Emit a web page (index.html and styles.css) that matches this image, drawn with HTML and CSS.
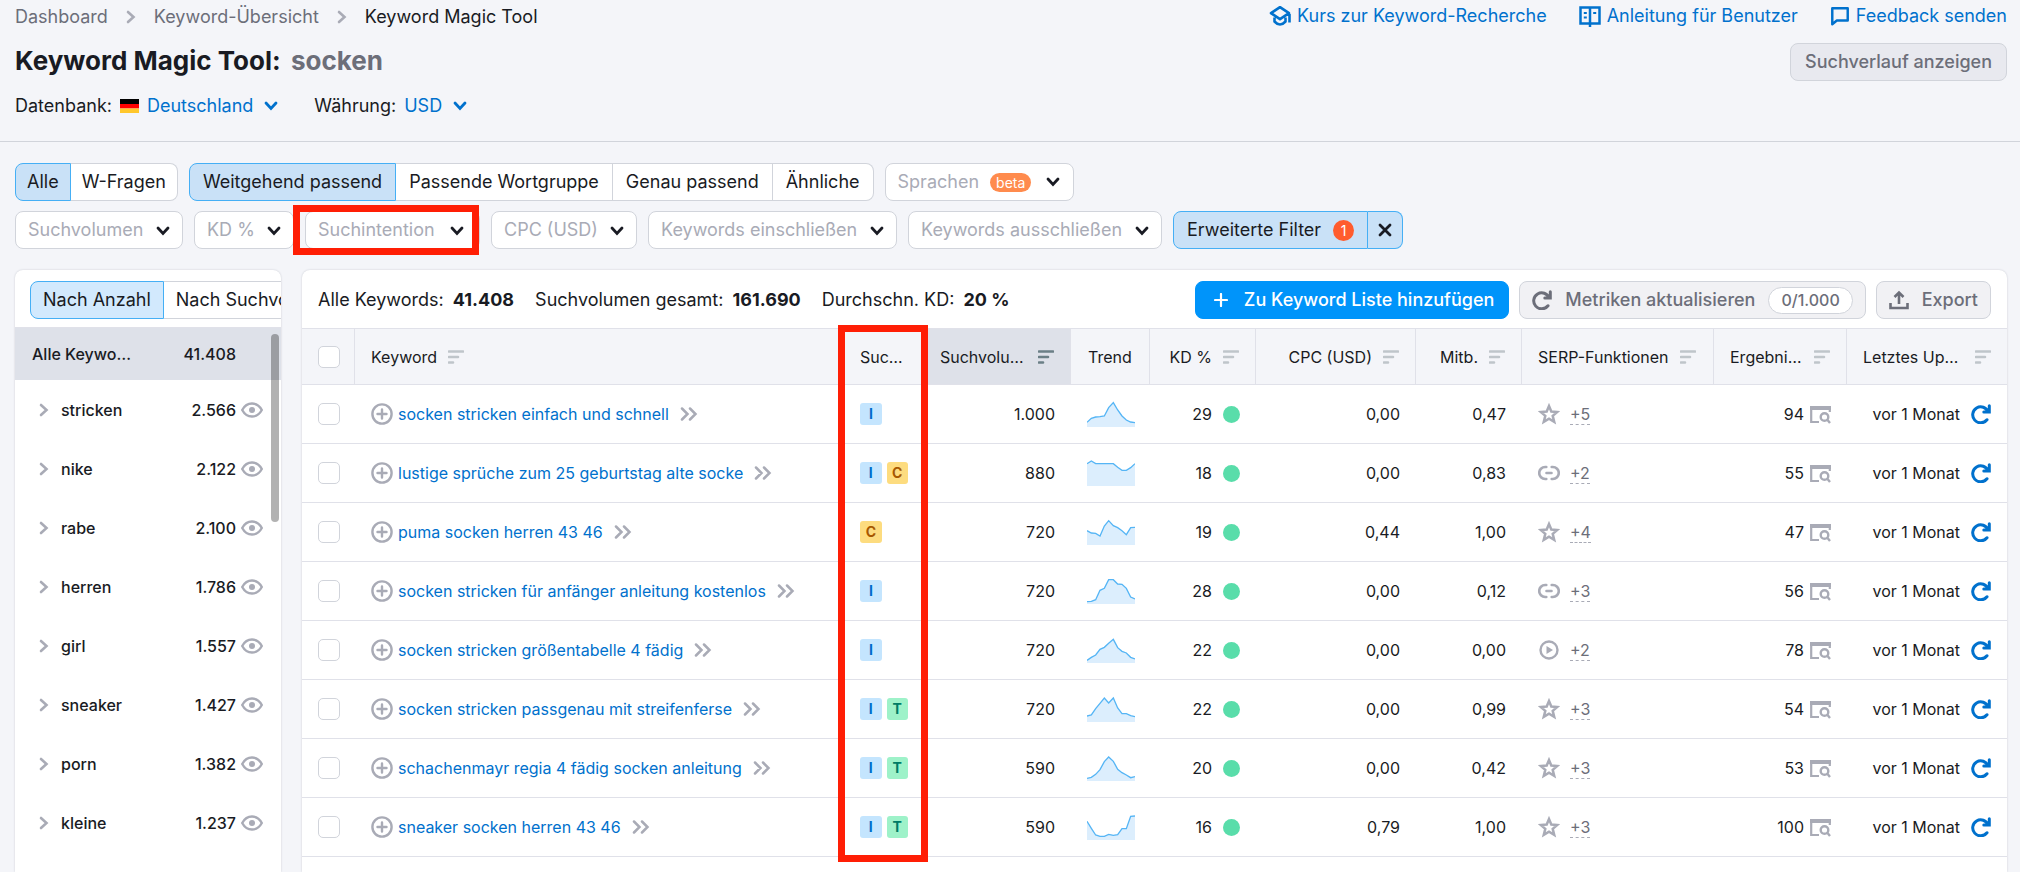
FILE: index.html
```html
<!DOCTYPE html>
<html lang="de">
<head>
<meta charset="utf-8">
<title>Keyword Magic Tool: socken</title>
<link rel="stylesheet" href="styles.css">
</head>
<body>
<svg class="sprite" aria-hidden="true">
  <symbol id="chev-down" viewBox="0 0 14 10"><path d="M2 2l5 5.500 5-5.500" fill="none" stroke="currentColor" stroke-width="2.800" stroke-linecap="round"/></symbol>
  <symbol id="chev-right" viewBox="0 0 10 14"><path d="M2 2l5.500 5L2 12" fill="none" stroke="currentColor" stroke-width="2.600" stroke-linecap="round"/></symbol>
  <symbol id="double" viewBox="0 0 18 14"><path d="M2 1.500L7.500 7 2 12.500M10 1.500L15.500 7 10 12.500" fill="none" stroke="currentColor" stroke-width="2.500" stroke-linecap="round"/></symbol>
  <symbol id="sort" viewBox="0 0 16 14"><path d="M1 1.500h14M1 7h9M1 12.500h4" fill="none" stroke="currentColor" stroke-width="2.600" stroke-linecap="round"/></symbol>
  <symbol id="plus-circle" viewBox="0 0 22 22"><circle cx="11" cy="11" r="9.600" fill="none" stroke="currentColor" stroke-width="2.400"/><path d="M11 6.500v9M6.500 11h9" stroke="currentColor" stroke-width="2.400" stroke-linecap="round"/></symbol>
  <symbol id="eye" viewBox="0 0 22 16"><path d="M1.200 8C3.500 3.700 7 1.500 11 1.500S18.500 3.700 20.800 8C18.500 12.300 15 14.500 11 14.500S3.500 12.300 1.200 8z" fill="none" stroke="currentColor" stroke-width="2.400"/><circle cx="11" cy="8" r="3" fill="currentColor"/></symbol>
  <symbol id="refresh" viewBox="0 0 20 20"><path d="M16 15.800A8 8 0 1 1 17.200 8M18.300 1.800V8H12.800" fill="none" stroke="currentColor" stroke-width="3" stroke-linecap="round"/></symbol>
  <symbol id="star" viewBox="0 0 22 22"><path d="M11 3l2.300 5.500 6 .5-4.600 3.900 1.500 5.900L11 15.600l-5.200 3.200 1.500-5.900L2.700 9l6-.5z" fill="none" stroke="currentColor" stroke-width="2.500"/></symbol>
  <symbol id="link" viewBox="0 0 22 22"><path d="M8.300 5H7.200a6 6 0 0 0 0 12h1.100M13.700 5h1.100a6 6 0 0 1 0 12h-1.100M8.500 11h5" fill="none" stroke="currentColor" stroke-width="2.600" stroke-linecap="round"/></symbol>
  <symbol id="play" viewBox="0 0 22 22"><circle cx="11" cy="11" r="8.500" fill="none" stroke="currentColor" stroke-width="2.400"/><path d="M8.500 7v8l6.500-4z" fill="currentColor"/></symbol>
  <symbol id="serp" viewBox="0 0 21 19"><path d="M0 1h21v4H0z" fill="currentColor"/><path d="M1.200 3v14H9M19.800 4v3" fill="none" stroke="currentColor" stroke-width="2.200"/><circle cx="14.500" cy="12" r="3.800" fill="none" stroke="currentColor" stroke-width="2.400"/><path d="M17.500 15l2.500 3" stroke="currentColor" stroke-width="2.400"/></symbol>
  <symbol id="upload" viewBox="0 0 20 20"><path d="M1.500 13v5h17v-5M10 14V2.500M5.500 7L10 2.500 14.500 7" fill="none" stroke="currentColor" stroke-width="2.600"/></symbol>
  <symbol id="cap" viewBox="0 0 22 22"><path d="M11 2.200L2 8.200l9 6 9-6zM20.500 9v8.500M5.500 12.500V16.500q5.500 6 11 0V12.500" fill="none" stroke="currentColor" stroke-width="2.600" stroke-linejoin="round"/></symbol>
  <symbol id="book" viewBox="0 0 22 22"><path d="M1.500 2.500h19v16h-19zM11 2.500V22" fill="none" stroke="currentColor" stroke-width="2.500"/><path d="M4.800 8h3M4.800 12.500h3M14.200 8h3" stroke="currentColor" stroke-width="2.200"/></symbol>
  <symbol id="bubble" viewBox="0 0 20 22"><path d="M1.500 2.500h17v13.500H6.500l-5 4z" fill="none" stroke="currentColor" stroke-width="2.700" stroke-linejoin="round"/></symbol>
  <symbol id="close" viewBox="0 0 14 14"><path d="M2 2l10 10M12 2L2 12" stroke="currentColor" stroke-width="2.800" stroke-linecap="round"/></symbol>
  <symbol id="plus" viewBox="0 0 14 14"><path d="M7 1v12M1 7h12" stroke="currentColor" stroke-width="2.200" stroke-linecap="round"/></symbol>
  <symbol id="flag-de" viewBox="0 0 19 14"><path d="M0 0h19v5H0z" fill="#000"/><path d="M0 5h19v4.500H0z" fill="#f00"/><path d="M0 9.500h19V14H0z" fill="#ffc72c"/></symbol>
</svg>

<header class="head">
  <div class="head-top">
    <nav class="crumbs" aria-label="Breadcrumb">
      <a href="#">Dashboard</a><svg class="i-right"><use href="#chev-right"/></svg>
      <a href="#">Keyword-Übersicht</a><svg class="i-right"><use href="#chev-right"/></svg>
      <span class="current">Keyword Magic Tool</span>
    </nav>
    <div class="help">
      <a href="#"><svg class="i-22"><use href="#cap"/></svg>Kurs zur Keyword-Recherche</a>
      <a href="#"><svg class="i-22"><use href="#book"/></svg>Anleitung für Benutzer</a>
      <a href="#"><svg class="i-20"><use href="#bubble"/></svg>Feedback senden</a>
    </div>
  </div>
  <div class="head-title">
    <h1>Keyword Magic Tool: <span>socken</span></h1>
    <button class="btn history">Suchverlauf anzeigen</button>
  </div>
  <div class="settings">
    <div class="setting">Datenbank: <svg class="flag"><use href="#flag-de"/></svg><button class="linkbtn">Deutschland<svg class="i-down"><use href="#chev-down"/></svg></button></div>
    <div class="setting">Währung: <button class="linkbtn">USD<svg class="i-down"><use href="#chev-down"/></svg></button></div>
  </div>
</header>

<section class="filters">
  <div class="filter-row">
    <div class="pills"><button class="pill on">Alle</button><button class="pill">W-Fragen</button></div>
    <div class="pills wide"><button class="pill on">Weitgehend passend</button><button class="pill">Passende Wortgruppe</button><button class="pill">Genau passend</button><button class="pill">Ähnliche</button></div>
    <button class="lang">Sprachen <span class="beta">beta</span><svg class="i-down"><use href="#chev-down"/></svg></button>
  </div>
  <div class="filter-row">
    <div class="drop"><select aria-label="Suchvolumen"><option>Suchvolumen</option></select><svg class="i-down"><use href="#chev-down"/></svg></div>
    <div class="drop"><select aria-label="KD %"><option>KD %</option></select><svg class="i-down"><use href="#chev-down"/></svg></div>
    <div class="drop marked"><select aria-label="Suchintention"><option>Suchintention</option></select><svg class="i-down"><use href="#chev-down"/></svg></div>
    <div class="drop"><select aria-label="CPC (USD)"><option>CPC (USD)</option></select><svg class="i-down"><use href="#chev-down"/></svg></div>
    <div class="drop"><select aria-label="Keywords einschließen"><option>Keywords einschließen</option></select><svg class="i-down"><use href="#chev-down"/></svg></div>
    <div class="drop"><select aria-label="Keywords ausschließen"><option>Keywords ausschließen</option></select><svg class="i-down"><use href="#chev-down"/></svg></div>
    <div class="pills"><button class="pill on adv">Erweiterte Filter <span class="count">1</span></button><button class="pill on clear" aria-label="Filter entfernen"><svg class="i-14"><use href="#close"/></svg></button></div>
  </div>
</section>

<main class="main">
  <aside class="side">
    <div class="side-top"><div class="pills wide"><button class="pill on">Nach Anzahl</button><button class="pill">Nach Suchvolumen</button></div></div>
    <div class="group all"><span>Alle Keywo…</span><b>41.408</b></div>
    <div class="group"><svg class="i-right"><use href="#chev-right"/></svg><span>stricken</span><b>2.566</b><svg class="i-eye"><use href="#eye"/></svg></div>
    <div class="group"><svg class="i-right"><use href="#chev-right"/></svg><span>nike</span><b>2.122</b><svg class="i-eye"><use href="#eye"/></svg></div>
    <div class="group"><svg class="i-right"><use href="#chev-right"/></svg><span>rabe</span><b>2.100</b><svg class="i-eye"><use href="#eye"/></svg></div>
    <div class="group"><svg class="i-right"><use href="#chev-right"/></svg><span>herren</span><b>1.786</b><svg class="i-eye"><use href="#eye"/></svg></div>
    <div class="group"><svg class="i-right"><use href="#chev-right"/></svg><span>girl</span><b>1.557</b><svg class="i-eye"><use href="#eye"/></svg></div>
    <div class="group"><svg class="i-right"><use href="#chev-right"/></svg><span>sneaker</span><b>1.427</b><svg class="i-eye"><use href="#eye"/></svg></div>
    <div class="group"><svg class="i-right"><use href="#chev-right"/></svg><span>porn</span><b>1.382</b><svg class="i-eye"><use href="#eye"/></svg></div>
    <div class="group"><svg class="i-right"><use href="#chev-right"/></svg><span>kleine</span><b>1.237</b><svg class="i-eye"><use href="#eye"/></svg></div>
    <div class="thumb"></div>
  </aside>

  <section class="panel">
    <div class="bar">
      <div class="stats"><span>Alle Keywords: <b>41.408</b></span><span>Suchvolumen gesamt: <b>161.690</b></span><span>Durchschn. KD: <b>20 %</b></span></div>
      <div class="actions">
        <button class="btn primary"><svg class="i-14"><use href="#plus"/></svg>Zu Keyword Liste hinzufügen</button>
        <button class="btn light"><svg class="i-20"><use href="#refresh"/></svg>Metriken aktualisieren<span class="quota">0/1.000</span></button>
        <button class="btn light"><svg class="i-20"><use href="#upload"/></svg>Export</button>
      </div>
    </div>
    <div class="table-wrap">
      <table>
        <colgroup><col class="c-check"><col><col class="c-intent"><col class="c-vol"><col class="c-trend"><col class="c-kd"><col class="c-cpc"><col class="c-kd"><col class="c-serp"><col class="c-res"><col class="c-upd"></colgroup>
        <thead><tr>
          <th><input type="checkbox" aria-label="Alle auswählen"></th>
          <th><div class="cell">Keyword<svg class="i-sort"><use href="#sort"/></svg></div></th>
          <th class="noline"><div class="cell">Suc…</div></th>
          <th class="sorted"><div class="cell between">Suchvolu…<svg class="i-sort"><use href="#sort"/></svg></div></th>
          <th><div class="cell center">Trend</div></th>
          <th><div class="cell end">KD %<svg class="i-sort"><use href="#sort"/></svg></div></th>
          <th><div class="cell end">CPC (USD)<svg class="i-sort"><use href="#sort"/></svg></div></th>
          <th><div class="cell end">Mitb.<svg class="i-sort"><use href="#sort"/></svg></div></th>
          <th><div class="cell">SERP-Funktionen<svg class="i-sort"><use href="#sort"/></svg></div></th>
          <th><div class="cell between">Ergebni…<svg class="i-sort"><use href="#sort"/></svg></div></th>
          <th><div class="cell between">Letztes Up…<svg class="i-sort"><use href="#sort"/></svg></div></th>
        </tr></thead>
        <tbody>
        <tr>
          <td><input type="checkbox" aria-label="Auswählen"></td>
          <td><div class="cell kw"><svg class="i-22"><use href="#plus-circle"/></svg><a href="#">socken stricken einfach und schnell</a><svg class="i-double"><use href="#double"/></svg></div></td>
          <td><div class="cell tags"><span class="tag i">I</span></div></td>
          <td><div class="cell end">1.000</div></td>
          <td><svg class="spark" viewBox="0 0 144 78"><path d="M0 64L13 52L26 48L39 47L52 45L65 20L79 5L92 27L105 45L118 57L131 63L144 65V78H0z"/><polyline points="0,64 13,52 26,48 39,47 52,45 65,20 79,5 92,27 105,45 118,57 131,63 144,65"/></svg></td>
          <td><div class="cell end kd">29<i class="dot"></i></div></td>
          <td><div class="cell end">0,00</div></td><td><div class="cell end">0,47</div></td>
          <td><div class="cell serp"><svg class="i-22"><use href="#star"/></svg><span class="more">+5</span></div></td>
          <td><div class="cell end res">94<svg class="i-serp"><use href="#serp"/></svg></div></td>
          <td><div class="cell end upd">vor 1 Monat<svg class="i-20"><use href="#refresh"/></svg></div></td>
        </tr>
        <tr>
          <td><input type="checkbox" aria-label="Auswählen"></td>
          <td><div class="cell kw"><svg class="i-22"><use href="#plus-circle"/></svg><a href="#">lustige sprüche zum 25 geburtstag alte socke</a><svg class="i-double"><use href="#double"/></svg></div></td>
          <td><div class="cell tags"><span class="tag i">I</span><span class="tag c">C</span></div></td>
          <td><div class="cell end">880</div></td>
          <td><svg class="spark" viewBox="0 0 144 78"><path d="M0 11L13 3L26 11L79 11L92 22L105 31L118 31L131 23L144 11V78H0z"/><polyline points="0,11 13,3 26,11 79,11 92,22 105,31 118,31 131,23 144,11"/></svg></td>
          <td><div class="cell end kd">18<i class="dot"></i></div></td>
          <td><div class="cell end">0,00</div></td><td><div class="cell end">0,83</div></td>
          <td><div class="cell serp"><svg class="i-22"><use href="#link"/></svg><span class="more">+2</span></div></td>
          <td><div class="cell end res">55<svg class="i-serp"><use href="#serp"/></svg></div></td>
          <td><div class="cell end upd">vor 1 Monat<svg class="i-20"><use href="#refresh"/></svg></div></td>
        </tr>
        <tr>
          <td><input type="checkbox" aria-label="Auswählen"></td>
          <td><div class="cell kw"><svg class="i-22"><use href="#plus-circle"/></svg><a href="#">puma socken herren 43 46</a><svg class="i-double"><use href="#double"/></svg></div></td>
          <td><div class="cell tags"><span class="tag c">C</span></div></td>
          <td><div class="cell end">720</div></td>
          <td><svg class="spark" viewBox="0 0 144 78"><path d="M0 35L13 42L26 43L39 51L52 21L65 5L79 20L92 26L105 35L118 47L131 26L144 25V78H0z"/><polyline points="0,35 13,42 26,43 39,51 52,21 65,5 79,20 92,26 105,35 118,47 131,26 144,25"/></svg></td>
          <td><div class="cell end kd">19<i class="dot"></i></div></td>
          <td><div class="cell end">0,44</div></td><td><div class="cell end">1,00</div></td>
          <td><div class="cell serp"><svg class="i-22"><use href="#star"/></svg><span class="more">+4</span></div></td>
          <td><div class="cell end res">47<svg class="i-serp"><use href="#serp"/></svg></div></td>
          <td><div class="cell end upd">vor 1 Monat<svg class="i-20"><use href="#refresh"/></svg></div></td>
        </tr>
        <tr>
          <td><input type="checkbox" aria-label="Auswählen"></td>
          <td><div class="cell kw"><svg class="i-22"><use href="#plus-circle"/></svg><a href="#">socken stricken für anfänger anleitung kostenlos</a><svg class="i-double"><use href="#double"/></svg></div></td>
          <td><div class="cell tags"><span class="tag i">I</span></div></td>
          <td><div class="cell end">720</div></td>
          <td><svg class="spark" viewBox="0 0 144 78"><path d="M0 71L13 70L26 65L39 37L52 31L65 5L79 5L92 18L105 19L118 31L131 57L144 63V78H0z"/><polyline points="0,71 13,70 26,65 39,37 52,31 65,5 79,5 92,18 105,19 118,31 131,57 144,63"/></svg></td>
          <td><div class="cell end kd">28<i class="dot"></i></div></td>
          <td><div class="cell end">0,00</div></td><td><div class="cell end">0,12</div></td>
          <td><div class="cell serp"><svg class="i-22"><use href="#link"/></svg><span class="more">+3</span></div></td>
          <td><div class="cell end res">56<svg class="i-serp"><use href="#serp"/></svg></div></td>
          <td><div class="cell end upd">vor 1 Monat<svg class="i-20"><use href="#refresh"/></svg></div></td>
        </tr>
        <tr>
          <td><input type="checkbox" aria-label="Auswählen"></td>
          <td><div class="cell kw"><svg class="i-22"><use href="#plus-circle"/></svg><a href="#">socken stricken größentabelle 4 fädig</a><svg class="i-double"><use href="#double"/></svg></div></td>
          <td><div class="cell tags"><span class="tag i">I</span></div></td>
          <td><div class="cell end">720</div></td>
          <td><svg class="spark" viewBox="0 0 144 78"><path d="M0 70L13 61L26 54L39 37L52 31L65 19L79 7L92 32L105 43L118 48L131 61L144 66V78H0z"/><polyline points="0,70 13,61 26,54 39,37 52,31 65,19 79,7 92,32 105,43 118,48 131,61 144,66"/></svg></td>
          <td><div class="cell end kd">22<i class="dot"></i></div></td>
          <td><div class="cell end">0,00</div></td><td><div class="cell end">0,00</div></td>
          <td><div class="cell serp"><svg class="i-22"><use href="#play"/></svg><span class="more">+2</span></div></td>
          <td><div class="cell end res">78<svg class="i-serp"><use href="#serp"/></svg></div></td>
          <td><div class="cell end upd">vor 1 Monat<svg class="i-20"><use href="#refresh"/></svg></div></td>
        </tr>
        <tr>
          <td><input type="checkbox" aria-label="Auswählen"></td>
          <td><div class="cell kw"><svg class="i-22"><use href="#plus-circle"/></svg><a href="#">socken stricken passgenau mit streifenferse</a><svg class="i-double"><use href="#double"/></svg></div></td>
          <td><div class="cell tags"><span class="tag i">I</span><span class="tag t">T</span></div></td>
          <td><div class="cell end">720</div></td>
          <td><svg class="spark" viewBox="0 0 144 78"><path d="M0 60L13 57L26 38L39 22L52 6L65 21L79 6L92 36L105 53L118 53L131 59L144 62V78H0z"/><polyline points="0,60 13,57 26,38 39,22 52,6 65,21 79,6 92,36 105,53 118,53 131,59 144,62"/></svg></td>
          <td><div class="cell end kd">22<i class="dot"></i></div></td>
          <td><div class="cell end">0,00</div></td><td><div class="cell end">0,99</div></td>
          <td><div class="cell serp"><svg class="i-22"><use href="#star"/></svg><span class="more">+3</span></div></td>
          <td><div class="cell end res">54<svg class="i-serp"><use href="#serp"/></svg></div></td>
          <td><div class="cell end upd">vor 1 Monat<svg class="i-20"><use href="#refresh"/></svg></div></td>
        </tr>
        <tr>
          <td><input type="checkbox" aria-label="Auswählen"></td>
          <td><div class="cell kw"><svg class="i-22"><use href="#plus-circle"/></svg><a href="#">schachenmayr regia 4 fädig socken anleitung</a><svg class="i-double"><use href="#double"/></svg></div></td>
          <td><div class="cell tags"><span class="tag i">I</span><span class="tag t">T</span></div></td>
          <td><div class="cell end">590</div></td>
          <td><svg class="spark" viewBox="0 0 144 78"><path d="M0 70L13 67L26 58L39 44L52 20L65 6L79 19L92 43L105 53L118 60L131 68L144 65V78H0z"/><polyline points="0,70 13,67 26,58 39,44 52,20 65,6 79,19 92,43 105,53 118,60 131,68 144,65"/></svg></td>
          <td><div class="cell end kd">20<i class="dot"></i></div></td>
          <td><div class="cell end">0,00</div></td><td><div class="cell end">0,42</div></td>
          <td><div class="cell serp"><svg class="i-22"><use href="#star"/></svg><span class="more">+3</span></div></td>
          <td><div class="cell end res">53<svg class="i-serp"><use href="#serp"/></svg></div></td>
          <td><div class="cell end upd">vor 1 Monat<svg class="i-20"><use href="#refresh"/></svg></div></td>
        </tr>
        <tr>
          <td><input type="checkbox" aria-label="Auswählen"></td>
          <td><div class="cell kw"><svg class="i-22"><use href="#plus-circle"/></svg><a href="#">sneaker socken herren 43 46</a><svg class="i-double"><use href="#double"/></svg></div></td>
          <td><div class="cell tags"><span class="tag i">I</span><span class="tag t">T</span></div></td>
          <td><div class="cell end">590</div></td>
          <td><svg class="spark" viewBox="0 0 144 78"><path d="M0 22L13 43L26 63L39 67L52 67L65 61L79 64L92 62L105 44L118 44L131 7L144 6V78H0z"/><polyline points="0,22 13,43 26,63 39,67 52,67 65,61 79,64 92,62 105,44 118,44 131,7 144,6"/></svg></td>
          <td><div class="cell end kd">16<i class="dot"></i></div></td>
          <td><div class="cell end">0,79</div></td><td><div class="cell end">1,00</div></td>
          <td><div class="cell serp"><svg class="i-22"><use href="#star"/></svg><span class="more">+3</span></div></td>
          <td><div class="cell end res">100<svg class="i-serp"><use href="#serp"/></svg></div></td>
          <td><div class="cell end upd">vor 1 Monat<svg class="i-20"><use href="#refresh"/></svg></div></td>
        </tr>
        </tbody>
      </table>
      <div class="column-mark"></div>
    </div>
  </section>
</main>
</body>
</html>
```

FILE: styles.css
```css
* { box-sizing: border-box; }
body {
  margin: 0;
  height: 100vh;
  overflow: hidden;
  display: flex;
  flex-direction: column;
  background: #f4f5f9;
  color: #191b23;
  font: 18px/24px Inter, "Liberation Sans", sans-serif;
}
button, select { font: inherit; color: inherit; margin: 0; cursor: pointer; }
a { text-decoration: none; color: inherit; }
svg { flex: none; display: block; }
.sprite { position: absolute; width: 0; height: 0; }

.i-down { width: 14px; height: 10px; }
.i-right { width: 10px; height: 14px; color: #a9abb6; }
.i-double { width: 18px; height: 14px; color: #a9abb6; }
.i-sort { width: 16px; height: 14px; color: #bfc5ca; }
.i-14 { width: 14px; height: 14px; }
.i-20 { width: 20px; height: 20px; }
.i-22 { width: 22px; height: 22px; }
.i-eye { width: 22px; height: 16px; color: #a9abb6; }
.i-serp { width: 21px; height: 19px; color: #a9abb6; }
.flag { width: 19px; height: 14px; }

.head { padding: 4px 13px 24px 15px; border-bottom: 1px solid #d1d4db; }
.head-top, .head-title { display: flex; justify-content: space-between; }
.crumbs { display: flex; align-items: center; gap: 18px; color: #6c6e79; height: 26px; }
.crumbs .current { color: #191b23; }
.help { display: flex; align-items: center; gap: 32px; color: #0071cd; height: 24px; }
.help a { display: flex; align-items: center; gap: 6px; }
.head-title { padding-top: 13px; align-items: flex-start; }
h1 { margin: 2px 0 0; font-size: 26px; line-height: 32px; font-weight: 700; }
h1 span { color: #6c6e79; margin-left: 4px; }
.settings { display: flex; gap: 36px; padding-top: 13px; }
.head { padding-bottom: 23px; }
.setting { display: flex; align-items: center; gap: 8px; }
.linkbtn { display: flex; align-items: center; gap: 11px; border: 0; padding: 0; background: none; color: #0071cd; }

.btn {
  display: flex; align-items: center; gap: 13px;
  height: 38px; padding: 0 14px;
  border: 1px solid #d1d4db; border-radius: 8px;
  background: #e8e9ef; color: #6c6e79; font-weight: 500;
}
.btn.light { background: #f1f1f4; padding: 0 12px; }
.btn.primary { background: #0094fa; border-color: #0094fa; color: #fff; gap: 16px; padding: 0 14px 0 18px; }

.filters { display: grid; gap: 10px; padding: 21px 13px 21px 15px; }
.filter-row { display: flex; gap: 11px; }
.pills { display: flex; }
.pill {
  display: flex; align-items: center;
  height: 38px; padding: 0 11px;
  border: 1px solid #d1d4db; border-left-width: 0;
  background: #fff; white-space: nowrap;
}
.wide .pill { padding: 0 13px; }
.pill:first-child { border-left-width: 1px; border-radius: 8px 0 0 8px; }
.pill:last-child { border-radius: 0 8px 8px 0; }
.pill.on { background: #c9e1f7; border-color: #45aff5; }
.pill.adv { gap: 12px; padding: 0 13px; }
.pill.clear { padding: 0 10px; }
.count {
  width: 21px; height: 21px; border-radius: 50%;
  background: #ff5c2e; color: #fff; font-size: 14px; line-height: 21px; text-align: center;
}
.lang {
  display: flex; align-items: center; gap: 11px;
  height: 38px; padding: 0 13px 0 12px;
  border: 1px solid #d1d4db; border-radius: 8px; background: #fff; color: #a9abb6;
}
.lang .i-down { color: #191b23; margin-left: 4px; }
.beta { padding: 0 6px; border-radius: 10px; background: #ff8b4d; color: #fff; font-size: 14px; line-height: 19px; }
.drop { position: relative; }
.drop select {
  appearance: none; height: 38px; padding: 0 38px 0 12px;
  border: 1px solid #d1d4db; border-radius: 8px; background: #fff; color: #a9abb6;
}
.drop .i-down { position: absolute; right: 13px; top: 15px; pointer-events: none; }
.drop.marked select { padding-right: 44px; }
.drop.marked .i-down { right: 16px; }
.marked::after {
  content: ""; position: absolute; inset: -6px 1px -6px -12px;
  border: 7px solid #ff1e05; pointer-events: none;
}

.main { flex: 1; min-height: 0; display: flex; gap: 21px; padding: 0 13px 0 15px; }
.side, .panel { background: #fff; border-radius: 8px 8px 0 0; box-shadow: 0 0 2px #c4c7cf; }
.side { position: relative; flex: none; width: 266px; overflow: hidden; font-size: 16px; font-weight: 500; }
.side-top { padding: 11px 0 8px 15px; border-bottom: 1px solid #e0e1e9; font-size: 18px; font-weight: 400; }
.side-top .pill { padding: 0 12px; }
.side-top .pill.on { background: #d2e9fd; }
.group { display: flex; align-items: center; height: 59px; padding: 0 18px 0 24px; }
.group span { flex: 1; padding-left: 12px; }
.group b { font-weight: 500; margin-right: 5px; }
.group.all { height: 52px; background: #dee1e9; padding: 0 40px 0 17px; }
.group.all span { padding-left: 0; }
.thumb { position: absolute; right: 2px; top: 64px; width: 8px; height: 188px; border-radius: 4px; background: rgba(0, 0, 0, .3); }

.panel { flex: 1; min-width: 0; }
.bar { display: flex; justify-content: space-between; align-items: center; padding: 11px 16px 9px; border-bottom: 1px solid #e0e1e9; }
.stats { display: flex; gap: 21px; white-space: nowrap; }
.stats b { font-weight: 700; margin-left: 4px; }
.actions { display: flex; gap: 10px; white-space: nowrap; }
.quota { padding: 0 12px; border: 1px solid #d1d4db; border-radius: 14px; background: #fff; font-size: 16px; line-height: 25px; }

.table-wrap { position: relative; }
table { width: 100%; table-layout: fixed; border-collapse: separate; border-spacing: 0; font-size: 16px; line-height: 20px; }
.c-check { width: 53px; }
.c-intent { width: 80px; }
.c-vol { width: 147px; }
.c-trend { width: 79px; }
.c-kd { width: 106px; }
.c-cpc { width: 160px; }
.c-serp { width: 192px; }
.c-res { width: 133px; }
.c-upd { width: 160px; }
th { height: 56px; padding: 0 16px; background: #f4f5f9; border-right: 1px solid #e0e1e9; border-bottom: 1px solid #e0e1e9; font-weight: 400; white-space: nowrap; }
th:last-child, th.noline { border-right: 0; }
th.sorted { background: #dee1e9; }
.sorted .i-sort { color: #6b7f86; }
td { height: 59px; padding: 0 16px; border-bottom: 1px solid #e0e1e9; white-space: nowrap; }
.cell { display: flex; align-items: center; gap: 11px; }
.end { justify-content: flex-end; }
.center { justify-content: center; }
.between { justify-content: space-between; }
.kw { gap: 5px; color: #a9abb6; }
.kw a { color: #0071cd; }
.kw .i-double { margin-left: 6px; }
.tags { gap: 5px; }
.tag { width: 22px; height: 22px; border-radius: 3px; font-size: 14px; line-height: 22px; font-weight: 700; text-align: center; }
.tag.i { background: #c4e5fe; color: #006dca; }
.tag.c { background: #fddc7f; color: #a75800; }
.tag.t { background: #9ef2c9; color: #007c65; }
.spark { width: 48px; height: 26px; }
.spark path { fill: #dceefd; }
.spark polyline { fill: none; stroke: #55b5f5; stroke-width: 4; }
.dot { width: 17px; height: 17px; border-radius: 50%; background: #59ddaa; }
.serp { color: #a9abb6; gap: 10px; }
.more { color: #6c6e79; border-bottom: 1px dashed #a9abb6; }
.res { gap: 6px; }
.upd .i-20 { color: #0071cd; }
input[type="checkbox"] {
  appearance: none; display: block; width: 22px; height: 22px; margin: 0;
  border: 1px solid #d1d4db; border-radius: 5px; background: #fff;
}
.column-mark {
  position: absolute; top: -4px; bottom: -5px; right: 1079px; width: 90px;
  border: 7px solid #ff1e05; pointer-events: none;
}
```
